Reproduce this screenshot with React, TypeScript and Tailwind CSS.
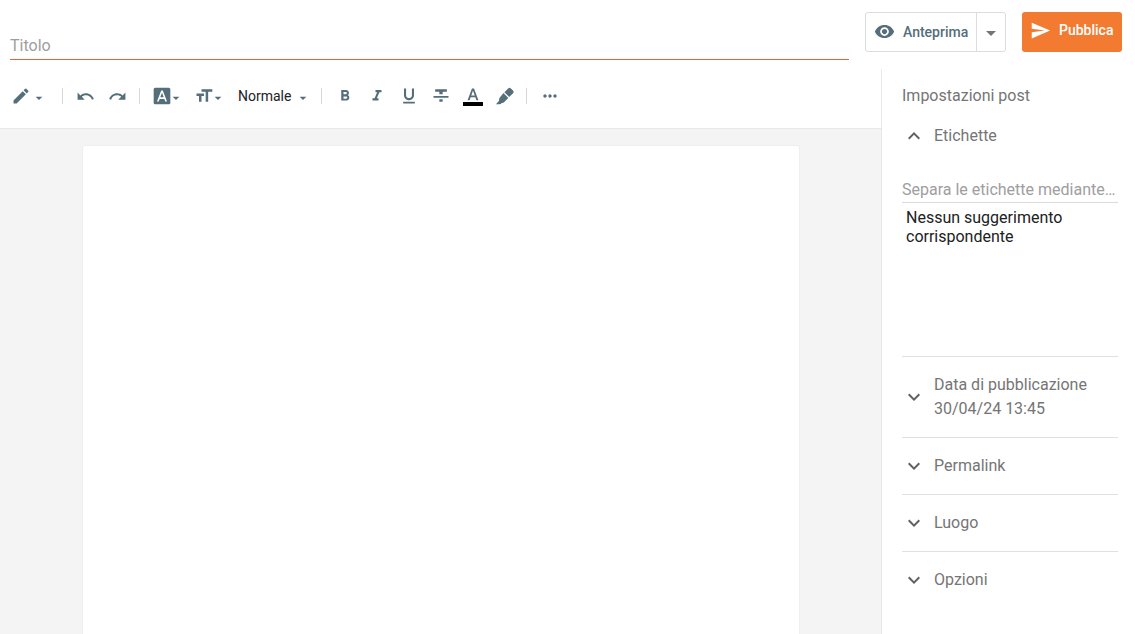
import React from "react";
import {
    MdArrowDropDown,
    MdEdit,
    MdExpandLess,
    MdExpandMore,
    MdFontDownload,
    MdFormatBold,
    MdFormatColorText,
    MdFormatItalic,
    MdFormatSize,
    MdFormatUnderlined,
    MdMoreHoriz,
    MdRedo,
    MdSend,
    MdUndo,
    MdVisibility,
} from "react-icons/md";

const sections = [
    { title: "Data di pubblicazione", detail: "30/04/24 13:45" },
    { title: "Permalink" },
    { title: "Luogo" },
    { title: "Opzioni" },
];

const ToolButton = ({
    label,
    className = "w-8",
    children,
}: {
    label: string;
    className?: string;
    children: React.ReactNode;
}) => (
    <button
        type="button"
        aria-label={label}
        className={`flex h-8 shrink-0 items-center justify-center ${className}`}
    >
        {children}
    </button>
);

const Separator = ({ className }: { className: string }) => (
    <div className={`h-4 w-px shrink-0 bg-[#d5d7d8] ${className}`} />
);

const Caret = ({ className = "" }: { className?: string }) => (
    <MdArrowDropDown size={16} className={`mt-1 shrink-0 ${className}`} />
);

const StrikeIcon = () => (
    <svg width="20" height="20" viewBox="0 0 24 24" fill="currentColor">
        <path d="M10 19h4v-3h-4v3zM5 4v3h5v3h4V7h5V4H5zM3 14h18v-2H3v2z" />
    </svg>
);

const TextColorIcon = () => (
    <span className="relative flex">
        <MdFormatColorText size={20} />
        <span className="absolute inset-x-0 bottom-0 h-1 bg-black" />
    </span>
);

const MarkerIcon = () => (
    <svg width="20" height="20" viewBox="0 0 20 20" fill="currentColor">
        <path d="M9.4 6.2 13.2 2.4q1.3-1.2 2.6 0l2.2 2.2q1.2 1.3 0 2.6L14.2 11z" />
        <path d="M8.5 7.1 13.3 11.9 9 16.2q-1 1-2.2.7-1 1.3-2.3 1.3H1L4.2 14.6q-.5-1.8.6-3.2z" />
    </svg>
);

const Toolbar = () => (
    <div
        role="toolbar"
        className="flex h-[60px] items-center border-b border-[#e8e8e8] pb-[5px] pl-3 text-[#546e7a]"
    >
        <ToolButton label="Modalità" className="w-[34px]">
            <MdEdit size={20} className="shrink-0" />
            <Caret />
        </ToolButton>
        <Separator className="mr-[6px] ml-4" />
        <ToolButton label="Annulla">
            <MdUndo size={19} />
        </ToolButton>
        <ToolButton label="Ripeti">
            <MdRedo size={19} />
        </ToolButton>
        <Separator className="mr-3 ml-[6px]" />
        <ToolButton label="Carattere">
            <MdFontDownload size={20} className="shrink-0" />
            <Caret className="-ml-1" />
        </ToolButton>
        <ToolButton label="Dimensione" className="ml-[10px] w-8">
            <MdFormatSize size={20} className="shrink-0" />
            <Caret className="-ml-1" />
        </ToolButton>
        <button
            type="button"
            className="ml-3 flex h-8 w-[73px] shrink-0 items-center justify-between text-sm text-[#212121]"
        >
            Normale
            <Caret className="text-[#546e7a]" />
        </button>
        <Separator className="mr-[7px] ml-[10px]" />
        <ToolButton label="Grassetto">
            <MdFormatBold size={18} />
        </ToolButton>
        <ToolButton label="Corsivo">
            <MdFormatItalic size={18} />
        </ToolButton>
        <ToolButton label="Sottolineato">
            <MdFormatUnderlined size={20} />
        </ToolButton>
        <ToolButton label="Barrato">
            <StrikeIcon />
        </ToolButton>
        <ToolButton label="Colore del testo">
            <TextColorIcon />
        </ToolButton>
        <ToolButton label="Colore di sfondo del testo">
            <MarkerIcon />
        </ToolButton>
        <Separator className="mr-[7px] ml-[5px]" />
        <ToolButton label="Altro">
            <MdMoreHoriz size={20} />
        </ToolButton>
    </div>
);

const Header = () => (
    <header className="flex h-[69px] shrink-0 items-start pr-[13px] pl-[10px]">
        <input
            type="text"
            aria-label="Titolo"
            placeholder="Titolo"
            className="mr-4 h-[60px] min-w-0 flex-1 border-b border-[#ee5f3c] pt-8 text-base outline-none placeholder:text-[#9e9e9e]"
        />
        <div className="mt-3 flex h-10 rounded-[3px] border border-[#dadce0] text-[#546e7a]">
            <button
                type="button"
                className="flex w-[110px] items-center gap-2 pb-px pl-2 text-sm font-medium"
            >
                <MdVisibility size={21} />
                Anteprima
            </button>
            <button
                type="button"
                aria-label="Altre opzioni"
                className="flex w-[29px] items-center justify-center border-l border-[#dadce0] pt-[2px] text-[#757575]"
            >
                <MdArrowDropDown size={24} />
            </button>
        </div>
        <button
            type="button"
            className="mt-3 ml-4 flex h-10 w-[100px] items-center gap-2 rounded-[3px] bg-[#f27b31] pb-1 pl-2 text-sm font-medium text-white"
        >
            <MdSend size={21} />
            Pubblica
        </button>
    </header>
);

const Sidebar = () => (
    <aside className="w-[254px] shrink-0 border-l border-[#e8e8e8] pt-[15px] pr-[17px] pl-5 text-base text-[#757575]">
        <h2>Impostazioni post</h2>
        <section className="h-[248px] pt-4">
            <button
                type="button"
                aria-expanded="true"
                className="flex items-center gap-2"
            >
                <MdExpandLess size={24} className="text-[#616161]" />
                Etichette
            </button>
            <input
                type="text"
                aria-label="Etichette"
                placeholder="Separa le etichette mediante virgole"
                className="mt-7 h-[27px] w-full border-b border-[#dadada] text-ellipsis outline-none placeholder:text-[#9e9e9e]"
            />
            <p className="px-1 pt-[5px] leading-[19px] text-[#212121]">
                Nessun suggerimento corrispondente
            </p>
        </section>
        {sections.map(({ title, detail }) => (
            <section key={title} className="border-t border-[#e0e0e0] py-4">
                <button
                    type="button"
                    aria-expanded="false"
                    className="flex w-full items-center gap-2 text-left"
                >
                    <MdExpandMore
                        size={24}
                        className="shrink-0 text-[#616161]"
                    />
                    <span>
                        {title}
                        {detail && <span className="block">{detail}</span>}
                    </span>
                </button>
            </section>
        ))}
    </aside>
);

export default function App() {
    return (
        <div className="flex h-screen flex-col overflow-hidden bg-white font-['Roboto',sans-serif]">
            <Header />
            <div className="flex min-h-0 flex-1">
                <main className="flex min-w-0 flex-1 flex-col">
                    <Toolbar />
                    <div className="flex flex-1 justify-center bg-[#f4f4f4] px-4 pt-4">
                        <div
                            role="textbox"
                            aria-label="Testo del post"
                            contentEditable
                            suppressContentEditableWarning
                            className="w-full max-w-[718px] rounded-t-[3px] border border-b-0 border-[#eeeeee] bg-white outline-none"
                        />
                    </div>
                </main>
                <Sidebar />
            </div>
        </div>
    );
}
